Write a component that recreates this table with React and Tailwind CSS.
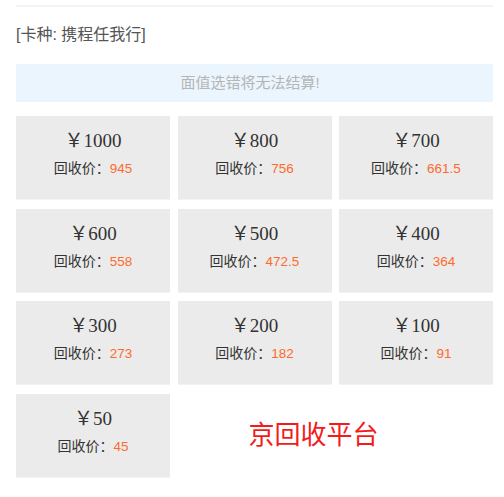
const items = [
  ["1000", "945"],
  ["800", "756"],
  ["700", "661.5"],
  ["600", "558"],
  ["500", "472.5"],
  ["400", "364"],
  ["300", "273"],
  ["200", "182"],
  ["100", "91"],
  ["50", "45"],
];

const sans = "font-['Liberation_Sans','Noto_Sans_CJK_SC',sans-serif]";

export default function App() {
  return (
    <div className={`w-[504px] h-[497px] bg-white ${sans}`}>
      <div className="pl-4 pr-[11px] pt-[5px]">
        <div className="h-[2px] bg-[#f3f3f3]" />
        <div className="mt-[17px] text-[16px] leading-[22px] text-[#555]">[卡种: 携程任我行]</div>
        <div className="mt-[18px] h-[38px] bg-[#ebf5fe] flex items-center justify-center pr-[9px] text-[15px] text-[#b5b5b5]">
          面值选错将无法结算!
        </div>
        <div className="mt-[14px] grid grid-cols-3 gap-x-[7.5px] gap-y-[9.67px]">
          {items.map(([v, p]) => (
            <div
              key={v}
              className="h-[83px] bg-[#ebebeb] shadow-[0_1px_0_#f3f3f3] flex flex-col items-center pt-[13px]"
            >
              <div className="font-['Liberation_Serif','Noto_Sans_CJK_SC',serif] text-[19px] leading-[24px] text-[#333]">
                ￥{v}
              </div>
              <div className="mt-[6px] text-[14px] leading-[18px] text-[#333] flex items-baseline">
                <span>回收价：</span>
                <span className="text-[13.5px] text-[#ff6a2c]">{p}</span>
              </div>
            </div>
          ))}
          <div className="col-span-2 h-[83px] flex items-center pl-[71px]">
            <span className="text-[26px] leading-[30px] text-[#f31b1b]">京回收平台</span>
          </div>
        </div>
      </div>
    </div>
  );
}
